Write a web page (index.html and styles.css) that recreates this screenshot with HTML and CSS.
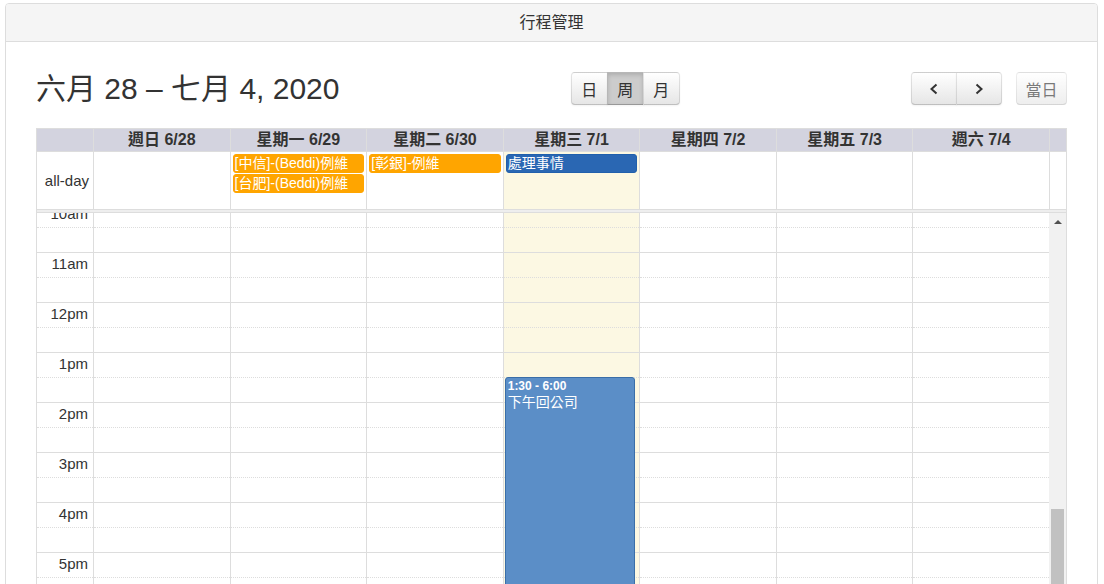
FILE: index.html
```html
<!DOCTYPE html>
<html lang="zh-Hant">
<head>
<meta charset="utf-8">
<title>行程管理</title>
<link rel="stylesheet" href="styles.css">
</head>
<body>
<div class="panel">
  <div class="panel-heading">行程管理</div>
  <div class="panel-body">
    <div class="toolbar">
      <h2 class="title">六月 28 – 七月 4, 2020</h2>
      <div class="toolbar-center">
        <div class="btn-group">
          <button class="btn first">日</button>
          <button class="btn active">周</button>
          <button class="btn last">月</button>
        </div>
      </div>
      <div class="toolbar-right">
        <div class="btn-group">
          <button class="btn first icon-btn"><svg width="10" height="12" viewBox="0 0 10 12"><polyline points="7.5,1.5 2.5,6 7.5,10.5" fill="none" stroke="#333" stroke-width="2"/></svg></button>
          <button class="btn last icon-btn"><svg width="10" height="12" viewBox="0 0 10 12"><polyline points="2.5,1.5 7.5,6 2.5,10.5" fill="none" stroke="#333" stroke-width="2"/></svg></button>
        </div>
        <button class="btn single disabled">當日</button>
      </div>
    </div>

    <div class="cal">
      <div class="row head">
        <div class="cell gutter"></div>
        <div class="cell day">週日 6/28</div>
        <div class="cell day">星期一 6/29</div>
        <div class="cell day">星期二 6/30</div>
        <div class="cell day">星期三 7/1</div>
        <div class="cell day">星期四 7/2</div>
        <div class="cell day">星期五 7/3</div>
        <div class="cell day">週六 7/4</div>
        <div class="cell sb"></div>
      </div>
      <div class="row allday">
        <div class="cell gutter label">all-day</div>
        <div class="cell day"></div>
        <div class="cell day">
          <div class="ev orange">[中信]-(Beddi)例維</div>
          <div class="ev orange">[台肥]-(Beddi)例維</div>
        </div>
        <div class="cell day">
          <div class="ev orange">[彰銀]-例維</div>
        </div>
        <div class="cell day today">
          <div class="ev blue">處理事情</div>
        </div>
        <div class="cell day"></div>
        <div class="cell day"></div>
        <div class="cell day"></div>
        <div class="cell sb"></div>
      </div>
      <div class="divider"></div>
      <div class="timegrid">
        <div class="tg-scroll">
          <div class="tg-inner">
            <div class="tg-gutter">
              <div class="slot hour">10am</div><div class="slot"></div>
              <div class="slot hour">11am</div><div class="slot"></div>
              <div class="slot hour">12pm</div><div class="slot"></div>
              <div class="slot hour">1pm</div><div class="slot"></div>
              <div class="slot hour">2pm</div><div class="slot"></div>
              <div class="slot hour">3pm</div><div class="slot"></div>
              <div class="slot hour">4pm</div><div class="slot"></div>
              <div class="slot hour">5pm</div><div class="slot"></div>
              <div class="slot hour">6pm</div><div class="slot"></div>
            </div>
            <div class="tg-col">
              <div class="slot hour"></div><div class="slot"></div><div class="slot hour"></div><div class="slot"></div><div class="slot hour"></div><div class="slot"></div><div class="slot hour"></div><div class="slot"></div><div class="slot hour"></div><div class="slot"></div><div class="slot hour"></div><div class="slot"></div><div class="slot hour"></div><div class="slot"></div><div class="slot hour"></div><div class="slot"></div><div class="slot hour"></div><div class="slot"></div>
            </div>
            <div class="tg-col">
              <div class="slot hour"></div><div class="slot"></div><div class="slot hour"></div><div class="slot"></div><div class="slot hour"></div><div class="slot"></div><div class="slot hour"></div><div class="slot"></div><div class="slot hour"></div><div class="slot"></div><div class="slot hour"></div><div class="slot"></div><div class="slot hour"></div><div class="slot"></div><div class="slot hour"></div><div class="slot"></div><div class="slot hour"></div><div class="slot"></div>
            </div>
            <div class="tg-col">
              <div class="slot hour"></div><div class="slot"></div><div class="slot hour"></div><div class="slot"></div><div class="slot hour"></div><div class="slot"></div><div class="slot hour"></div><div class="slot"></div><div class="slot hour"></div><div class="slot"></div><div class="slot hour"></div><div class="slot"></div><div class="slot hour"></div><div class="slot"></div><div class="slot hour"></div><div class="slot"></div><div class="slot hour"></div><div class="slot"></div>
            </div>
            <div class="tg-col today">
              <div class="slot hour"></div><div class="slot"></div><div class="slot hour"></div><div class="slot"></div><div class="slot hour"></div><div class="slot"></div><div class="slot hour"></div><div class="slot"></div><div class="slot hour"></div><div class="slot"></div><div class="slot hour"></div><div class="slot"></div><div class="slot hour"></div><div class="slot"></div><div class="slot hour"></div><div class="slot"></div><div class="slot hour"></div><div class="slot"></div>
              <div class="tev">
                <div class="time">1:30 - 6:00</div>
                <div class="tt">下午回公司</div>
              </div>
            </div>
            <div class="tg-col">
              <div class="slot hour"></div><div class="slot"></div><div class="slot hour"></div><div class="slot"></div><div class="slot hour"></div><div class="slot"></div><div class="slot hour"></div><div class="slot"></div><div class="slot hour"></div><div class="slot"></div><div class="slot hour"></div><div class="slot"></div><div class="slot hour"></div><div class="slot"></div><div class="slot hour"></div><div class="slot"></div><div class="slot hour"></div><div class="slot"></div>
            </div>
            <div class="tg-col">
              <div class="slot hour"></div><div class="slot"></div><div class="slot hour"></div><div class="slot"></div><div class="slot hour"></div><div class="slot"></div><div class="slot hour"></div><div class="slot"></div><div class="slot hour"></div><div class="slot"></div><div class="slot hour"></div><div class="slot"></div><div class="slot hour"></div><div class="slot"></div><div class="slot hour"></div><div class="slot"></div><div class="slot hour"></div><div class="slot"></div>
            </div>
            <div class="tg-col">
              <div class="slot hour"></div><div class="slot"></div><div class="slot hour"></div><div class="slot"></div><div class="slot hour"></div><div class="slot"></div><div class="slot hour"></div><div class="slot"></div><div class="slot hour"></div><div class="slot"></div><div class="slot hour"></div><div class="slot"></div><div class="slot hour"></div><div class="slot"></div><div class="slot hour"></div><div class="slot"></div><div class="slot hour"></div><div class="slot"></div>
            </div>
          </div>
        </div>
        <div class="scrollbar"><span class="arrow"></span><span class="thumb"></span></div>
      </div>
    </div>
  </div>
</div>
</body>
</html>
```
FILE: styles.css
```css
html, body {
  margin: 0;
  background: #fff;
  overflow: hidden;
}
body {
  font-family: "Liberation Sans", "Noto Sans CJK TC", sans-serif;
  color: #333;
}
.panel {
  margin: 3px 6px 0 5px;
  border: 1px solid #ddd;
  border-radius: 4px 4px 0 0;
}
.panel-heading {
  background: #f5f5f5;
  border-bottom: 1px solid #ddd;
  border-radius: 3px 3px 0 0;
  height: 37px;
  line-height: 37px;
  text-align: center;
  font-size: 16px;
  color: #333;
}
.panel-body {
  padding: 30px 30px 0 30px;
}
.toolbar {
  display: flex;
  align-items: center;
  height: 33px;
  margin-bottom: 23px;
}
.title {
  margin: 0;
  font-size: 30px;
  font-weight: normal;
  line-height: 33px;
  height: 33px;
  white-space: nowrap;
}
.toolbar-center {
  flex: 1;
  display: flex;
  justify-content: center;
}
.toolbar-right {
  display: flex;
  gap: 14px;
}
.btn-group {
  display: flex;
}
.btn {
  height: 33px;
  margin: 0;
  padding: 0 9.5px;
  font-family: inherit;
  font-size: 16px;
  color: #333;
  background: #f5f5f5 linear-gradient(#fff, #e6e6e6);
  border: 1px solid;
  border-color: rgba(0,0,0,.1) rgba(0,0,0,.1) rgba(0,0,0,.25);
  box-shadow: inset 0 1px 0 rgba(255,255,255,.2), 0 1px 2px rgba(0,0,0,.05);
  border-radius: 0;
  display: flex;
  align-items: center;
  justify-content: center;
}
.btn-group .btn + .btn {
  margin-left: -1px;
}
.btn.first { border-radius: 4px 0 0 4px; }
.btn.last { border-radius: 0 4px 4px 0; }
.btn.single { border-radius: 4px; padding: 0 8.5px; }
.btn.icon-btn { padding: 0 17px; }
.btn.active {
  background: #ccc;
  box-shadow: inset 0 2px 4px rgba(0,0,0,.15), 0 1px 2px rgba(0,0,0,.05);
}
.btn.disabled {
  opacity: .65;
  box-shadow: none;
}

.cal {
  border: 1px solid #ddd;
  border-bottom: none;
}
.row {
  display: grid;
  grid-template-columns: 56px repeat(7, 1fr) 17px;
}
.head {
  background: #d3d3df;
  height: 23px;
  box-sizing: border-box;
  border-bottom: 1px solid #ddd;
}
.head .cell {
  font-weight: bold;
  font-size: 16px;
  line-height: 22px;
  text-align: center;
  white-space: nowrap;
}
.cell.day, .cell.sb {
  border-left: 1px solid #ddd;
}
.allday {
  height: 57px;
}
.allday .cell.day {
  padding-top: 2px;
  min-width: 0;
}
.allday .label {
  font-size: 15px;
  line-height: 57px;
  text-align: right;
  padding-right: 4px;
}
.ev {
  margin: 0 2px 1px 2px;
  height: 19px;
  box-sizing: border-box;
  border: 1px solid;
  border-radius: 3px;
  color: #fff;
  font-size: 14px;
  line-height: 17px;
  padding-left: 1px;
  white-space: nowrap;
  overflow: hidden;
}
.ev.orange {
  background: #ffa500;
  border-color: #ffa500;
}
.ev.blue {
  background: #2a67b3;
  border-color: #2160ac;
}
.today {
  background: #fcf8e3;
}
.divider {
  height: 2px;
  background: #eee;
  border-top: 1px solid #ddd;
  border-bottom: 1px solid #ddd;
}
.timegrid {
  display: grid;
  grid-template-columns: 1fr 17px;
  height: 371px;
}
.tg-scroll {
  overflow: hidden;
}
.tg-inner {
  display: grid;
  grid-template-columns: 56px repeat(7, 1fr);
  margin-top: -11px;
}
.slot {
  height: 25px;
  box-sizing: border-box;
  border-top: 1px dotted #ddd;
}
.slot.hour {
  border-top-style: solid;
}
.tg-gutter .slot.hour {
  text-align: right;
  padding-right: 5px;
  font-size: 15px;
  line-height: 22px;
}
.tg-col {
  border-left: 1px solid #ddd;
  position: relative;
}
.tev {
  position: absolute;
  top: 175px;
  left: 1px;
  right: 4px;
  height: 225px;
  background: #5b8ec7;
  border: 1px solid #3a6ea8;
  border-radius: 3px;
  color: #fff;
  padding: 1px 2px;
  overflow: hidden;
}
.tev .time {
  font-size: 12px;
  font-weight: bold;
  line-height: 14px;
}
.tev .tt {
  font-size: 14px;
  line-height: 18px;
}
.scrollbar {
  background: #f1f1f1;
  display: flex;
  flex-direction: column;
  align-items: center;
}
.arrow {
  display: block;
  margin-top: 7px;
  width: 0;
  height: 0;
  border-left: 4px solid transparent;
  border-right: 4px solid transparent;
  border-bottom: 4px solid #505050;
}
.thumb {
  display: block;
  margin-top: 285px;
  width: 13px;
  flex: 1;
  background: #c1c1c1;
}
```
